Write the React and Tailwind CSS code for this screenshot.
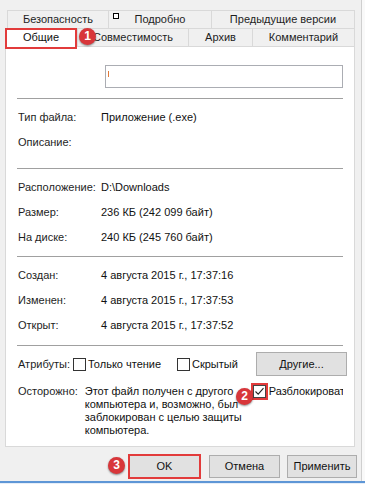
import React from 'react'

const Tab = ({ children, className = '' }) => (
  <div className={`flex items-center justify-center border-l border-t border-[#d9d9d9] bg-[#f0f0f0] text-[#1e1e1e] ${className}`}>
    {children}
  </div>
)

const Badge = ({ n, className }) => (
  <div className={`absolute w-[17px] h-[17px] rounded-full bg-[#d8363a] text-white text-[12px] font-bold flex items-center justify-center shadow-[0_1px_2px_rgba(0,0,0,0.45)] ${className}`}>
    {n}
  </div>
)

const Checkbox = ({ checked = false, className = '' }) => (
  <div className={`w-[13px] h-[13px] bg-white border border-[#333] flex items-center justify-center ${className}`}>
    {checked && (
      <svg width="11" height="11" viewBox="0 0 11 11">
        <path d="M1.5 5.5 L4.2 8.2 L9.5 2.2" fill="none" stroke="#222" strokeWidth="1.1" />
      </svg>
    )}
  </div>
)

const Row = ({ label, value }) => (
  <div className="flex items-center h-[25px]">
    <div className="w-[84px] pl-[1px] text-[#1e1e1e]">{label}</div>
    <div className="text-[#111]">{value}</div>
  </div>
)

const Sep = ({ className = '' }) => <div className={`h-px bg-[#a0a0a0] ${className}`} />

const Button = ({ children, className = '' }) => (
  <div className={`h-[23px] bg-[#e1e1e1] border border-[#adadad] flex items-center justify-center text-[#111] ${className}`}>
    {children}
  </div>
)

export default function App() {
  return (
    <div className="w-[365px] h-[484px] bg-[#f0f0f0] flex flex-col relative overflow-hidden text-[11px] leading-[13px] font-['Liberation_Sans',Arial,sans-serif]">

      <div className="flex flex-1">
        <div className="w-[361px] flex flex-col pt-[10px]">

          {/* top tab row */}
          <div className="flex h-[18px] ml-[7px]">
            <Tab className="w-[101px]">Безопасность</Tab>
            <Tab className="w-[103px]">Подробно</Tab>
            <Tab className="w-[144px] border-r">Предыдущие версии</Tab>
          </div>

          {/* second tab row */}
          <div className="flex h-[18px] ml-[5px]">
            <div className="relative z-10 w-[72px] h-[21px] bg-white border-2 border-[#e23b3b] flex items-center justify-center text-[#111] pb-[3px]">
              Общие
            </div>
            <Tab className="w-[111px]">Совместимость</Tab>
            <Tab className="w-[64px]">Архив</Tab>
            <Tab className="w-[103px] border-r">Комментарий</Tab>
          </div>

          {/* panel */}
          <div className="ml-[5px] w-[350px] h-[401px] bg-white border border-[#d9d9d9] px-[11px]">

            <div className="flex mt-[18px]">
              <div className="ml-[88px] flex-1 h-[23px] border border-[#abadb3] pl-[2px] flex items-center">
                <div className="w-px h-[6px] bg-[#e07a3a] mb-[6px]" />
              </div>
            </div>

            <Sep className="mt-[10px]" />
            <div className="pt-[6px]">
              <Row label="Тип файла:" value="Приложение (.exe)" />
              <Row label="Описание:" value="" />
            </div>

            <Sep className="mt-[13px]" />
            <div className="pt-[6px]">
              <Row label="Расположение:" value="D:\Downloads" />
              <Row label="Размер:" value="236 КБ (242 099 байт)" />
              <Row label="На диске:" value="240 КБ (245 760 байт)" />
            </div>

            <Sep className="mt-[6px]" />
            <div className="pt-[6px]">
              <Row label="Создан:" value="4 августа 2015 г., 17:37:16" />
              <Row label="Изменен:" value="4 августа 2015 г., 17:37:53" />
              <Row label="Открыт:" value="4 августа 2015 г., 17:37:52" />
            </div>

            <Sep className="mt-[7px]" />

            {/* attributes */}
            <div className="flex items-center h-[24px] mt-[6px]">
              <div className="w-[56px] pl-[1px] text-[#1e1e1e]">Атрибуты:</div>
              <Checkbox />
              <div className="ml-[2px] w-[89px] text-[#111]">Только чтение</div>
              <Checkbox />
              <div className="ml-[2px] text-[#111]">Скрытый</div>
              <Button className="ml-auto mr-[-4px] w-[91px] h-[24px]">Другие...</Button>
            </div>

            {/* warning */}
            <div className="flex mt-[9px]">
              <div className="w-[72px] pl-[1px] text-[#1e1e1e]">Осторожно:</div>
              <div className="w-[150px] text-[#111] whitespace-nowrap">
                <div>Этот файл получен с другого</div>
                <div>компьютера и, возможно, был</div>
                <div>заблокирован с целью защиты</div>
                <div>компьютера.</div>
              </div>
              <div className="ml-[16px] mt-[-2px] w-[17px] h-[17px] border-2 border-[#e23b3b] flex items-center justify-center">
                <Checkbox checked className="border-[#444]" />
              </div>
              <div className="ml-[1px] w-[79px] overflow-hidden whitespace-nowrap text-[#111]">Разблокировать</div>
            </div>
          </div>

          {/* bottom buttons */}
          <div className="flex items-center mt-[7px] ml-[128px]">
            <div className="w-[73px] h-[25px] border-2 border-[#e23b3b] flex">
              <div className="flex-1 bg-[#e1e1e1] flex items-center justify-center text-[#111]">OK</div>
            </div>
            <Button className="ml-[8px] w-[71px]">Отмена</Button>
            <Button className="ml-[7px] w-[70px]">Применить</Button>
          </div>
        </div>
        <div className="w-px bg-[#cfcfcf]" />
        <div className="flex-1 bg-[#f9f9f9]" />
      </div>

      <div className="h-[2px] bg-[#5e96d6]" />
      <div className="h-px bg-[#e6eef8]" />

      {/* small square artifact */}
      <div className="absolute left-[113px] top-[13px] w-[6px] h-[6px] bg-white border border-black" />

      <Badge n="1" className="left-[79px] top-[28px]" />
      <Badge n="2" className="left-[236px] top-[388px]" />
      <Badge n="3" className="left-[108px] top-[457px]" />
    </div>
  )
}
